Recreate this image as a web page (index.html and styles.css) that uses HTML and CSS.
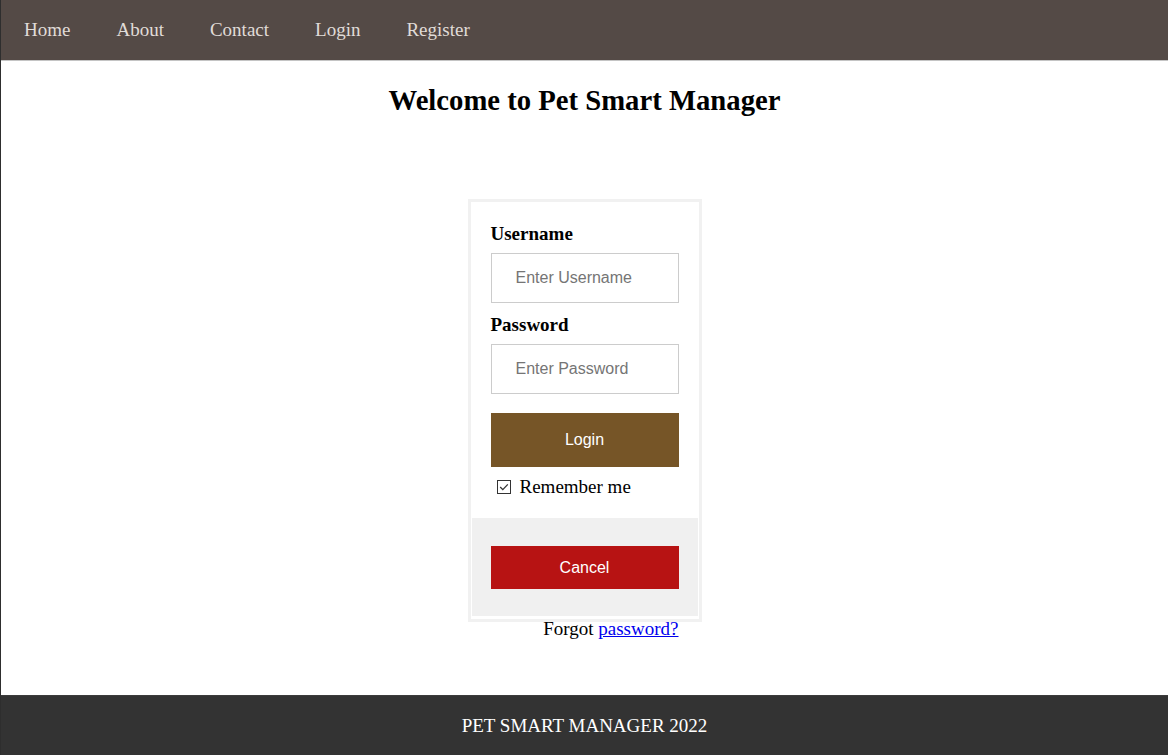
FILE: index.html
```html
<!DOCTYPE html>
<html>
<head>
<meta charset="utf-8">
<title>Pet Smart Manager</title>
<link rel="stylesheet" href="styles.css">
</head>
<body>
<nav class="topnav">
  <a href="#">Home</a>
  <a href="#">About</a>
  <a href="#">Contact</a>
  <a href="#">Login</a>
  <a href="#">Register</a>
</nav>
<main class="main">
  <h2 class="title">Welcome to Pet Smart Manager</h2>
  <div class="login-wrap">
    <form class="login-box">
      <div class="container">
        <label class="field-label" for="uname">Username</label>
        <input class="field" id="uname" type="text" placeholder="Enter Username">
        <label class="field-label" for="psw">Password</label>
        <input class="field" id="psw" type="password" placeholder="Enter Password">
        <button class="btn btn-login" type="button">Login</button>
        <label class="remember">
          <span class="check"><svg width="14" height="14" viewBox="0 0 14 14"><rect x="0.5" y="0.5" width="13" height="13" fill="#fff" stroke="#333"/><path d="M3.2 7 L5.8 9.6 L10.8 4.4" fill="none" stroke="#333" stroke-width="1.3"/></svg></span>
          Remember me
        </label>
      </div>
      <div class="container cancel-area">
        <button class="btn btn-cancel" type="button">Cancel</button>
      </div>
    </form>
    <div class="forgot">Forgot <a href="#">password?</a></div>
  </div>
</main>
<footer class="footer">PET SMART MANAGER 2022</footer>
</body>
</html>
```
FILE: styles.css
```css
html, body {
  margin: 0;
  padding: 0;
}
body {
  font-family: "Liberation Serif", "Times New Roman", serif;
  min-height: 755px;
  display: flex;
  flex-direction: column;
  border-left: 1px solid #2e2e2e;
  box-sizing: border-box;
  background: #fff;
  color: #000;
}
.topnav {
  height: 60px;
  background: #544a46;
  border-bottom: 1px solid #c4c4c4;
  display: flex;
  align-items: center;
  padding: 0;
}
.topnav a {
  color: #e0dcd8;
  text-decoration: none;
  font-size: 19px;
  padding: 0 23px;
  line-height: 60px;
}
.main {
  flex: 1;
  display: flex;
  flex-direction: column;
  align-items: center;
}
.title {
  font-size: 28.7px;
  font-weight: bold;
  margin: 23px 0 0;
  line-height: 32px;
  text-align: center;
}
.login-wrap {
  width: 234px;
  margin-top: 83px;
}
.login-box {
  border: 3px solid #f1f1f1;
  margin: 0;
  padding: 0 0 3px;
}
.container {
  padding: 21px 20px 20px;
  display: flex;
  flex-direction: column;
}
.field-label {
  font-weight: bold;
  font-size: 19px;
  line-height: 21px;
}
.field {
  font-family: "Liberation Sans", Arial, sans-serif;
  font-size: 16px;
  height: 50px;
  box-sizing: border-box;
  border: 1px solid #ccc;
  padding: 0 24px;
  margin: 9px 0 11px;
  outline: none;
  color: #000;
}
.field::placeholder {
  color: #757575;
}
.btn {
  font-family: "Liberation Sans", Arial, sans-serif;
  font-size: 16px;
  color: #fff;
  border: none;
  cursor: pointer;
  width: 100%;
}
.btn-login {
  background: #765527;
  height: 54px;
  margin-top: 8px;
}
.remember {
  font-size: 19px;
  display: flex;
  align-items: center;
  margin-top: 9px;
  padding-left: 6px;
  line-height: 22px;
}
.check {
  display: inline-flex;
  margin-right: 9px;
}
.cancel-area {
  background: #f0f0f0;
  margin: 0 1px;
  padding: 28px 19px 27px;
}
.btn-cancel {
  background: #b71313;
  height: 43px;
}
.forgot {
  font-size: 19px;
  text-align: right;
  padding-right: 23px;
  margin-top: 0;
  line-height: 14px;
}
.forgot a {
  color: #0000ee;
  text-decoration: underline;
}
.footer {
  height: 60px;
  background: #333;
  border-top: 1px solid #3c3c3c;
  box-sizing: border-box;
  color: #fff;
  font-size: 19px;
  display: flex;
  align-items: center;
  justify-content: center;
}
```
